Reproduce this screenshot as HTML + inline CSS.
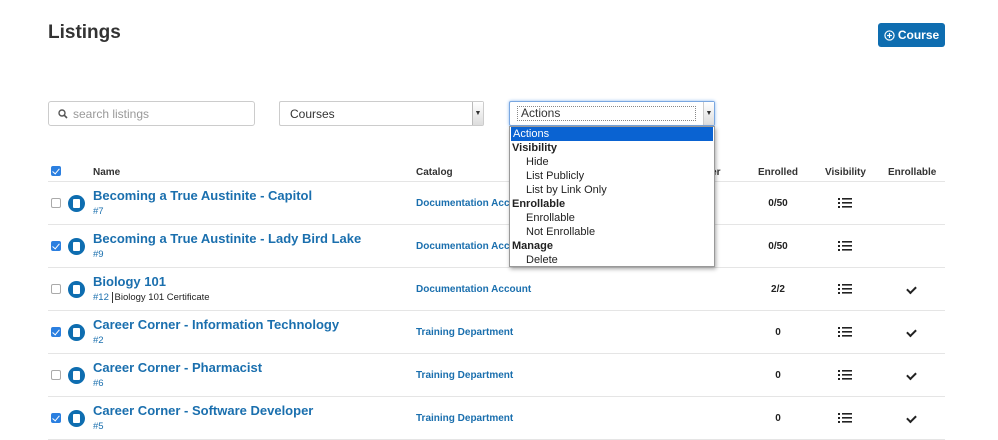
<!DOCTYPE html>
<html><head><meta charset="utf-8"><style>
*{box-sizing:border-box;margin:0;padding:0}
body{width:998px;height:440px;overflow:hidden;background:#fff;font-family:"Liberation Sans",Arial,sans-serif;color:#333;position:relative}
.abs{position:absolute}
h1{position:absolute;left:48px;top:22px;font-size:19px;font-weight:bold;color:#333}
.btn{left:878px;top:23px;width:67px;height:24px;background:#0e6db0;border-radius:3px;color:#fff;font-size:12px;font-weight:bold;display:flex;align-items:center;justify-content:center;gap:3px}
.search{left:48px;top:101px;width:207px;height:25px;border:1px solid #ccc;border-radius:3px;font-size:12px;color:#999;padding:5px 0 0 24px}
.sel{left:279px;top:101px;width:205px;height:25px;border:1px solid #ccc;border-radius:2px;font-size:12px;color:#333;padding:5px 0 0 10px}
.arrow{position:absolute;right:0;top:0;width:11px;height:23px;background:linear-gradient(#fff,#ddd);border-left:1px solid #bbb;font-size:7px;text-align:center;line-height:23px}
.act{left:509px;top:101px;width:206px;height:25px;border:1px solid #7aa7e0;box-shadow:0 0 3px #8cb8f0;border-radius:2px;background:#fff}
.act .in{position:absolute;left:7px;top:4px;width:179px;height:15px;border:1px dotted #888;font-size:12px;padding:0 3px;line-height:13px}
.menu{left:509px;top:126px;width:206px;height:141px;background:#fff;border:1px solid #999;box-shadow:1px 2px 4px rgba(0,0,0,.35);font-size:11px;color:#222}
.menu div{height:14px;line-height:14px;padding-left:2px}
.menu .g{font-weight:bold}
.menu .o{padding-left:16px}
.menu .h{background:#0a63d2;color:#fff;margin:0 1px}
.th{top:167px;font-size:10px;font-weight:bold;color:#333}
.line{left:48px;width:897px;height:1px;background:#e5e5e5}
.cb{width:10px;height:10px;border:1px solid #aaa;border-radius:2px;background:#fff}
.cb.on{background:#2b7fe0;border-color:#2b7fe0}
.cb.on::after{content:"";position:absolute;left:2px;top:0px;width:3px;height:6px;border:solid #fff;border-width:0 1.5px 1.5px 0;transform:rotate(40deg)}
.ic{width:17px;height:17px;border-radius:50%;background:#0e6db0}
.ic::after{content:"";position:absolute;left:5px;top:4px;width:7px;height:9px;background:#fff;border-radius:1px}
.t{font-size:13px;font-weight:bold;color:#1a6fae}
.s{font-size:9.5px;color:#1a6fae}
.cat{font-size:10px;font-weight:bold;color:#1a6fae}
.num{font-size:10px;font-weight:bold;color:#222;width:60px;text-align:center}
.ck{width:9px;height:6px;border:solid #222;border-width:0 0 2px 2px;transform:rotate(-45deg)}
</style></head><body>
<h1>Listings</h1>
<div class="abs btn"><svg width="11" height="11" viewBox="0 0 12 12"><circle cx="6" cy="6" r="5" fill="none" stroke="#fff" stroke-width="1.3"/><path d="M6 3.3v5.4M3.3 6h5.4" stroke="#fff" stroke-width="1.3"/></svg>Course</div>
<div class="abs search"><svg class="abs" style="left:9px;top:7px" width="10" height="10" viewBox="0 0 10 10"><circle cx="4" cy="4" r="3" fill="none" stroke="#555" stroke-width="1.4"/><path d="M6.2 6.2L9 9" stroke="#555" stroke-width="1.6"/></svg>search listings</div>
<div class="abs sel">Courses<div class="arrow">▼</div></div>

<div class="abs th" style="left:93px">Name</div>
<div class="abs th" style="left:416px">Catalog</div>
<div class="abs th" style="left:680px">Provider</div>
<div class="abs th" style="left:758px">Enrolled</div>
<div class="abs th" style="left:825px">Visibility</div>
<div class="abs th" style="left:888px">Enrollable</div>
<div class="abs cb on" style="left:51px;top:166px"></div>
<div class="abs line" style="top:181px"></div>

<div class="abs cb" style="left:51px;top:198px"></div><div class="abs ic" style="left:68px;top:195px"></div>
<div class="abs t" style="left:93px;top:188px">Becoming a True Austinite - Capitol</div><div class="abs s" style="left:93px;top:206px">#7</div>
<div class="abs cat" style="left:416px;top:198px">Documentation Account</div><div class="abs num" style="left:748px;top:198px">0/50</div>
<div class="abs line" style="top:224px"></div>

<div class="abs cb on" style="left:51px;top:241px"></div><div class="abs ic" style="left:68px;top:238px"></div>
<div class="abs t" style="left:93px;top:231px">Becoming a True Austinite - Lady Bird Lake</div><div class="abs s" style="left:93px;top:249px">#9</div>
<div class="abs cat" style="left:416px;top:241px">Documentation Account</div><div class="abs num" style="left:748px;top:241px">0/50</div>
<div class="abs line" style="top:267px"></div>

<div class="abs cb" style="left:51px;top:284px"></div><div class="abs ic" style="left:68px;top:281px"></div>
<div class="abs t" style="left:93px;top:274px">Biology 101</div><div class="abs s" style="left:93px;top:292px">#12 <span style="color:#222;border-left:1px solid #333;padding-left:2px">Biology 101 Certificate</span></div>
<div class="abs cat" style="left:416px;top:284px">Documentation Account</div><div class="abs num" style="left:748px;top:284px">2/2</div><div class="abs ck" style="left:907px;top:286px"></div>
<div class="abs line" style="top:310px"></div>

<div class="abs cb on" style="left:51px;top:327px"></div><div class="abs ic" style="left:68px;top:324px"></div>
<div class="abs t" style="left:93px;top:317px">Career Corner - Information Technology</div><div class="abs s" style="left:93px;top:335px">#2</div>
<div class="abs cat" style="left:416px;top:327px">Training Department</div><div class="abs num" style="left:748px;top:327px">0</div><div class="abs ck" style="left:907px;top:329px"></div>
<div class="abs line" style="top:353px"></div>

<div class="abs cb" style="left:51px;top:370px"></div><div class="abs ic" style="left:68px;top:367px"></div>
<div class="abs t" style="left:93px;top:360px">Career Corner - Pharmacist</div><div class="abs s" style="left:93px;top:378px">#6</div>
<div class="abs cat" style="left:416px;top:370px">Training Department</div><div class="abs num" style="left:748px;top:370px">0</div><div class="abs ck" style="left:907px;top:372px"></div>
<div class="abs line" style="top:396px"></div>

<div class="abs cb on" style="left:51px;top:413px"></div><div class="abs ic" style="left:68px;top:410px"></div>
<div class="abs t" style="left:93px;top:403px">Career Corner - Software Developer</div><div class="abs s" style="left:93px;top:421px">#5</div>
<div class="abs cat" style="left:416px;top:413px">Training Department</div><div class="abs num" style="left:748px;top:413px">0</div><div class="abs ck" style="left:907px;top:415px"></div>
<div class="abs line" style="top:439px"></div>

<svg class="abs" style="left:838px;top:198px" width="14" height="230" viewBox="0 0 14 230">
<g id="l" fill="#222"><rect x="0" y="0" width="2" height="2"/><rect x="4" y="0" width="10" height="1.6"/><rect x="0" y="4" width="2" height="2"/><rect x="4" y="4" width="10" height="1.6"/><rect x="0" y="8" width="2" height="2"/><rect x="4" y="8" width="10" height="1.6"/></g>
<use href="#l" y="43"/><use href="#l" y="86"/><use href="#l" y="129"/><use href="#l" y="172"/><use href="#l" y="215"/>
</svg>

<div class="abs act"><div class="in">Actions</div><div class="arrow" style="height:23px;border-left:1px solid #ccc">▼</div></div>
<div class="abs menu">
<div class="h">Actions</div>
<div class="g">Visibility</div>
<div class="o">Hide</div>
<div class="o">List Publicly</div>
<div class="o">List by Link Only</div>
<div class="g">Enrollable</div>
<div class="o">Enrollable</div>
<div class="o">Not Enrollable</div>
<div class="g">Manage</div>
<div class="o">Delete</div>
</div>
</body></html>
